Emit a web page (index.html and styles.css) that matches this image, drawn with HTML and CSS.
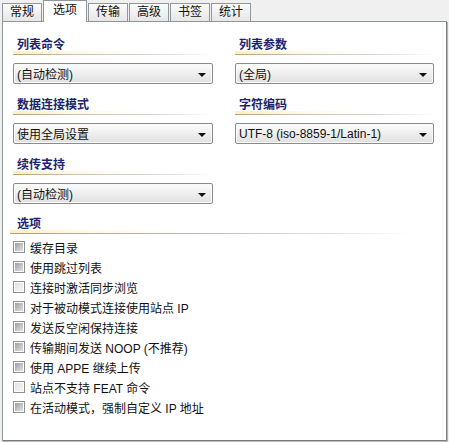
FILE: index.html
```html
<!DOCTYPE html>
<html lang="zh-CN">
<head>
<meta charset="utf-8">
<title>站点设置 - 选项</title>
<link rel="stylesheet" href="styles.css">
</head>
<body>
<div class="tabs">
  <div class="tab">常规</div>
  <div class="tab active">选项</div>
  <div class="tab">传输</div>
  <div class="tab">高级</div>
  <div class="tab">书签</div>
  <div class="tab">统计</div>
</div>
<div class="panel">
  <div class="grid">
    <div class="field">
      <div class="heading">列表命令</div>
      <div class="select"><span>(自动检测)</span><i class="arrow"></i></div>
    </div>
    <div class="field">
      <div class="heading">列表参数</div>
      <div class="select"><span>(全局)</span><i class="arrow"></i></div>
    </div>
    <div class="field">
      <div class="heading">数据连接模式</div>
      <div class="select"><span>使用全局设置</span><i class="arrow"></i></div>
    </div>
    <div class="field">
      <div class="heading">字符编码</div>
      <div class="select"><span>UTF-8 (iso-8859-1/Latin-1)</span><i class="arrow"></i></div>
    </div>
    <div class="field">
      <div class="heading">续传支持</div>
      <div class="select"><span>(自动检测)</span><i class="arrow"></i></div>
    </div>
  </div>
  <div class="options">
    <div class="heading wide">选项</div>
    <ul class="checks">
      <li><i class="box on"></i>缓存目录</li>
      <li><i class="box on"></i>使用跳过列表</li>
      <li><i class="box"></i>连接时激活同步浏览</li>
      <li><i class="box on"></i>对于被动模式连接使用站点 IP</li>
      <li><i class="box on"></i>发送反空闲保持连接</li>
      <li><i class="box on"></i>传输期间发送 NOOP (不推荐)</li>
      <li><i class="box on"></i>使用 APPE 继续上传</li>
      <li><i class="box"></i>站点不支持 FEAT 命令</li>
      <li><i class="box on"></i>在活动模式，强制自定义 IP 地址</li>
    </ul>
  </div>
</div>
</body>
</html>
```
FILE: styles.css
```css
html, body {
  margin: 0;
  padding: 0;
}
body {
  width: 449px;
  height: 442px;
  background: #f0f0f0;
  font-family: "Liberation Sans", "Noto Sans CJK SC", sans-serif;
  font-size: 12px;
  color: #000;
  overflow: hidden;
}
.tabs {
  display: flex;
  align-items: flex-end;
  height: 21px;
  padding-left: 2px;
  position: relative;
  z-index: 2;
}
.tab {
  box-sizing: border-box;
  width: 40px;
  height: 18px;
  margin-right: 1px;
  border: 1px solid #8f9798;
  border-bottom: none;
  background: linear-gradient(#fbfbfb, #e6e6e6);
  text-align: center;
  line-height: 17px;
  color: #111;
}
.tab.active {
  width: 44px;
  height: 22px;
  margin-bottom: -1px;
  background: #fff;
  line-height: 19px;
}
.panel {
  box-sizing: border-box;
  margin-left: 2px;
  width: 445px;
  height: 420px;
  background: #fff;
  border: 1px solid #8f9798;
  border-right-color: #7c7c7c;
  border-bottom-color: #7c7c7c;
  box-shadow: 1px 1px 0 #b8b8b8, inset -3px 0 0 #fff, inset -4px 0 0 #f2f2f2;
  padding: 2px 0 0 10px;
}
.grid {
  display: grid;
  grid-template-columns: 200px 199px;
  column-gap: 22px;
}
.field {
  margin-top: 11px;
}
.heading {
  height: 20px;
  line-height: 20px;
  padding-left: 4px;
  font-weight: bold;
  color: #1c2470;
  background:
    linear-gradient(to right, #b5a37a 0%, #c4c0b4 30%, #d4d4d4 70%, rgba(230,230,230,0) 100%) left bottom / 100% 1px no-repeat,
    linear-gradient(to right, rgba(255,226,140,0.55) 0%, rgba(255,236,180,0.3) 35%, rgba(255,255,255,0) 70%) left bottom / 100% 4px no-repeat;
}
.select {
  box-sizing: border-box;
  height: 21px;
  margin-top: 8px;
  border: 1px solid #8b8b8b;
  border-radius: 2px;
  background: linear-gradient(#fdfdfd, #f0f0f0 45%, #e0e0e0);
  box-shadow: inset 0 0 0 1px #fafafa;
  display: flex;
  align-items: center;
  justify-content: space-between;
  padding: 0 6px 0 3px;
  color: #111;
}
.arrow {
  width: 0;
  height: 0;
  border-left: 4px solid transparent;
  border-right: 4px solid transparent;
  border-top: 4px solid #111;
  margin-top: 2px;
}
.options {
  margin-left: -3px;
  margin-top: 10px;
}
.heading.wide {
  width: 395px;
  padding-left: 7px;
  background:
    linear-gradient(to right, #a9a188 0%, #b8b8b8 45%, #dcdcdc 75%, rgba(240,240,240,0) 100%) left bottom / 100% 1px no-repeat,
    linear-gradient(to right, rgba(255,226,140,0.55) 0%, rgba(255,236,180,0.3) 20%, rgba(255,255,255,0) 45%) left bottom / 100% 4px no-repeat;
}
.checks {
  list-style: none;
  margin: 3px 0 0 3px;
  padding: 0;
}
.checks li {
  height: 20px;
  display: flex;
  align-items: center;
  color: #111;
}
.box {
  box-sizing: border-box;
  width: 12px;
  height: 12px;
  margin-right: 5px;
  border: 1px solid #8e8f8f;
  background: #fff;
  padding: 1px;
  display: flex;
}
.box::after {
  content: "";
  flex: 1;
  background: linear-gradient(135deg, #e4e4e4, #f4f4f4);
}
.box.on::after {
  background: linear-gradient(135deg, #9c9c9c, #c8c8c8 60%, #dedede);
}
```
